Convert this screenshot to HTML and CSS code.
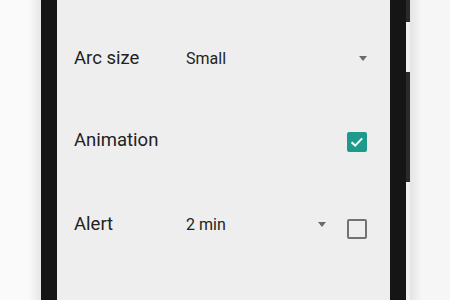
FILE: index.html
```html
<!DOCTYPE html>
<html lang="en">
<head>
    <meta charset="UTF-8">
    <title>Settings</title>
    <link rel="stylesheet" href="styles.css">
</head>
<body>
<div class="device">
    <div class="outside"></div>
    <div class="bezel"></div>
    <div class="screen">
        <div class="row">
            <span class="label">Arc size</span>
            <div class="spinner">
                <span class="value">Small</span>
                <span class="arrow"></span>
            </div>
        </div>
        <div class="row">
            <span class="label">Animation</span>
            <div class="fill"></div>
            <span class="check on">
                <svg width="16" height="16" viewBox="0 0 16 16"><path d="M2.6 8.2 L6.2 11.6 L13.2 4.4" fill="none" stroke="#fff" stroke-width="2"/></svg>
            </span>
        </div>
        <div class="row last">
            <span class="label">Alert</span>
            <div class="spinner">
                <span class="value">2 min</span>
                <span class="arrow"></span>
            </div>
            <span class="check"></span>
        </div>
    </div>
    <div class="bezel"></div>
    <div class="buttons">
        <div class="btn top"></div>
        <div class="btn mid"></div>
    </div>
    <div class="outside right"></div>
</div>
</body>
</html>
```
FILE: styles.css
```css
*{ padding: 0; margin: 0; box-sizing: border-box;}
body{
    width: 450px;
    height: 300px;
    overflow: hidden;
    background: #f7f7f7;
    font-family: Roboto, "Noto Sans", sans-serif;
}
.device{
    display: flex;
    height: 300px;
}
.outside{
    width: 41px;
    background: linear-gradient(to right, #fafafa 70%, #e6e6e6);
}
.outside.right{
    flex: 1;
    background: linear-gradient(to right, #e4e4e4, #f6f6f6 30%);
}
.bezel{
    width: 16px;
    background: #151515;
}
.screen{
    width: 333px;
    background: #eeeeee;
    padding: 17px 23px 0 17px;
}
.row{
    display: flex;
    align-items: center;
    height: 82px;
}
.row.last{
    height: 86px;
}
.label{
    width: 112px;
    font-size: 18.5px;
    color: #222;
}
.spinner{
    flex: 1;
    display: flex;
    align-items: center;
    justify-content: space-between;
}
.fill{
    flex: 1;
}
.value{
    font-size: 16px;
    color: #222;
}
.arrow{
    width: 0;
    height: 0;
    border-left: 4.5px solid transparent;
    border-right: 4.5px solid transparent;
    border-top: 5px solid #6a6a6a;
}
.check{
    width: 20px;
    height: 20px;
    margin-left: 21px;
    margin-top: 10px;
    border: 2px solid #727272;
    border-radius: 2px;
    display: flex;
    align-items: center;
    justify-content: center;
}
.check.on{
    margin-top: 4px;
    border: none;
    background: #1e9a8c;
}
.buttons{
    width: 4px;
    background: #f0f0f0;
}
.btn{
    background: #2a2a2a;
}
.btn.top{
    height: 22px;
}
.btn.mid{
    height: 110px;
    margin-top: 50px;
}
```
